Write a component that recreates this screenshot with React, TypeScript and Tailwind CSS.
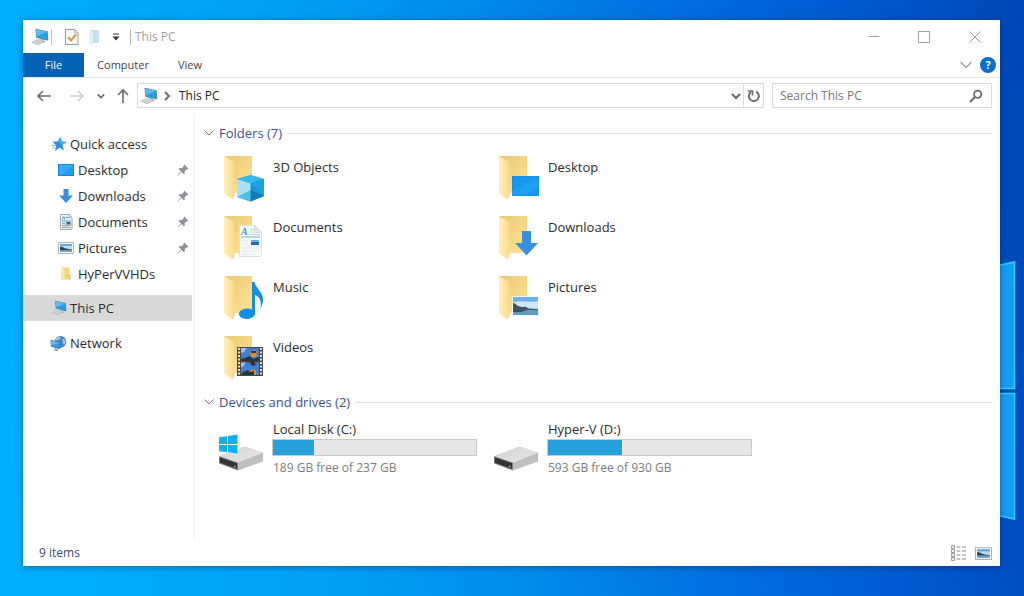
import { useState } from 'react';
import type { ReactNode } from 'react';

interface IconProps {
  className?: string;
}

interface SidebarItem {
  name: string;
  icon: ReactNode;
  pinned?: boolean;
}

interface Folder {
  name: string;
  overlay: ReactNode;
}

interface Drive {
  name: string;
  free: number;
  total: number;
  system?: boolean;
}

function PcIcon({ className }: IconProps) {
  return (
    <svg viewBox="0 0 18 18" className={className} aria-hidden="true">
      <path d="M4.500.8l12.200 2.500.6 8.700-1.200.6L5.300 9.700z" fill="#5d7f97" />
      <path d="M5 1.500l11 2.300.5 7.900-10.700-2.600z" fill="#2b9fe6" />
      <path d="M5 1.500l11 2.300L5.700 8.200z" fill="#5dbdf2" />
      <path d="M10 10.600l2.500.6.3 1.600 2.200.7-2 1.100-4-1z" fill="#9aa4ab" />
      <path d="M.8 13.500L7 10.700l6.500 2.300-6.300 3z" fill="#d3d8db" />
      <path d="M.8 13.500L7.200 16l6.300-3v.9l-6.300 3L.8 14.400z" fill="#a9b1b6" />
      <path d="M2.800 13.500L7.600 11.400M4.600 14.200l4.900-2.200M6.300 14.800l5-2.200" stroke="#b0b8bd" strokeWidth=".5" />
    </svg>
  );
}

function StarIcon({ className }: IconProps) {
  return (
    <svg viewBox="0 0 16 16" className={className} aria-hidden="true">
      <path d="M9.300 1l1.300 4.500 4.900.4-4.100 2.900 1.400 5.700-4.300-3.100L3.900 15l1.400-5.200L1.500 5.500l5.100.1z" fill="#2492e0" />
      <path d="M9.300 1l1.300 4.500 4.900.4-4.100 2.900-4.800-3.200z" fill="#45aef0" />
      <path d="M.6 9.400h4M1.600 12h2.600" stroke="#6ab7ec" />
    </svg>
  );
}

function DesktopIcon({ className }: IconProps) {
  return (
    <svg viewBox="0 0 16 16" className={className} aria-hidden="true">
      <path d="M0 2h16v12H0z" fill="#1287dd" />
      <path d="M1 3h14v10H1z" fill="#1e9cf0" />
      <path d="M1 3h14L4 13H1z" fill="#33aaf6" />
    </svg>
  );
}

function DownloadIcon({ className }: IconProps) {
  return (
    <svg viewBox="0 0 16 16" className={className} aria-hidden="true">
      <path d="M5.500 1h5v6.500H15L8 15 1 7.500h4.500z" fill="#3a8fdd" />
    </svg>
  );
}

function DocumentIcon({ className }: IconProps) {
  return (
    <svg viewBox="0 0 16 16" className={className} aria-hidden="true">
      <path d="M2.500.5h8.700l2.800 2.800v12.200H2.500z" fill="#f1f3f4" stroke="#a0a7ac" />
      <path d="M11 .5v3h3" fill="#d8dde0" stroke="#a0a7ac" strokeWidth=".7" />
      <path d="M4 5.500l1.800-3 1 3M8 3.500h2.500M4 7h8.500" stroke="#3d9ae0" fill="none" />
      <path d="M4 9.300h3.500M4 11.300h8.500M4 13.300h8.500" stroke="#8a949b" />
      <path d="M8.500 8h4v2.500h-4z" fill="#38647f" />
    </svg>
  );
}

function PictureIcon({ className }: IconProps) {
  return (
    <svg viewBox="0 0 16 16" className={className} aria-hidden="true">
      <path d="M.5 2.500h15v11H.5z" fill="#fff" stroke="#a9b4bc" />
      <path d="M2 4h12v8H2z" fill="#b9def5" />
      <path d="M2 4h12v2H2z" fill="#5ba9e6" />
      <path d="M2 6.500c2 0 3 .8 4.500 1.500S10 9 14 9.500V10H2z" fill="#2c4453" />
      <path d="M2 10h12v2H2z" fill="#6d9cbd" />
    </svg>
  );
}

function SmallFolderIcon({ className }: IconProps) {
  return (
    <svg viewBox="0 0 16 16" className={className} aria-hidden="true">
      <path d="M3 1.500h8.500v12H3z" fill="#f5d479" />
      <path d="M3 1.500l3.500 1.200v12.100L3 13.500z" fill="#fde7a6" />
      <path d="M10.500 9h2v4.500h-2z" fill="#ecc769" />
    </svg>
  );
}

function NetworkIcon({ className }: IconProps) {
  return (
    <svg viewBox="0 0 18 18" className={className} aria-hidden="true">
      <circle cx="11" cy="7.200" r="6.200" fill="#3b7fc4" />
      <path d="M8 2.500c2-1 4 0 3.500 1.500S9 4.500 8 5.500 5.500 5.500 5.500 5 6.500 3 8 2.500zM13.500 4c1.500 0 2.500 1 2.800 2.500s-.3 3-1.300 3.500-2-.8-1.500-2.300-1.500-3.200 0-3.700z" fill="#94c5ea" />
      <path d="M.5 5L11 7.500V15L1 12.500z" fill="#4c7290" />
      <path d="M1.100 5.900l9.300 2.200v6l-8.900-2.200z" fill="#2b9fe6" />
      <path d="M1.100 5.900l9.300 2.200-9 2.800z" fill="#5dbdf2" />
      <path d="M5 13.800l3 .7v1.300l1.500.6-2 .9L3 16.200l2-.8z" fill="#9aa7b0" />
    </svg>
  );
}

function PinIcon({ className }: IconProps) {
  return (
    <svg viewBox="0 0 12 12" className={className} aria-hidden="true">
      <path d="M7.300.6l4.100 4.100-1 .7-.7-.2-2.100 2.100.2 2.100-1 .9L4.600 8 .8 11.400l-.3-.3L4 7.400 1.700 5.100l.9-1 2.100.2 2.100-2.100-.2-.8z" fill="#8b9299" />
    </svg>
  );
}

function CheckPageIcon({ className }: IconProps) {
  return (
    <svg viewBox="0 0 16 18" className={className} aria-hidden="true">
      <path d="M1.500 1.500h9l3.500 3.500v11.500H1.500z" fill="#fafafa" stroke="#999" />
      <path d="M10.500 1.500V5H14" fill="none" stroke="#a8a8a8" strokeWidth=".8" />
      <path d="M4 9.300l3 3.200 5-6" fill="none" stroke="#e2963a" strokeWidth="2" />
    </svg>
  );
}

function FadedFolderIcon({ className }: IconProps) {
  return (
    <svg viewBox="0 0 12 16" className={className} aria-hidden="true">
      <path d="M1 1h10v13H1z" fill="#c6dfec" />
      <path d="M1 1l4 1.500V16l-4-1.500z" fill="#e0eff6" />
    </svg>
  );
}

function Chevron({ className }: IconProps) {
  return (
    <svg viewBox="0 0 10 10" className={className} fill="none" stroke="currentColor" aria-hidden="true">
      <path d="M.5 2.500L5 7l4.500-4.500" />
    </svg>
  );
}

function BoldChevron({ className }: IconProps) {
  return (
    <svg viewBox="0 0 10 10" className={className} fill="none" stroke="currentColor" strokeWidth="2" aria-hidden="true">
      <path d="M1 3l4 4 4-4" />
    </svg>
  );
}

function FolderIcon({ children }: { children: ReactNode }) {
  return (
    <svg viewBox="0 0 48 48" className="size-12 shrink-0" aria-hidden="true">
      <defs>
        <linearGradient id="folderBack" x1="0" y1="0" x2="1" y2="1">
          <stop offset="0" stopColor="#ebc873" />
          <stop offset="1" stopColor="#fde497" />
        </linearGradient>
        <linearGradient id="folderFlap" x1="0" y1="0" x2="1" y2="0">
          <stop offset="0" stopColor="#fff0bd" />
          <stop offset=".5" stopColor="#fde5a0" />
          <stop offset="1" stopColor="#f8d988" />
        </linearGradient>
      </defs>
      <path d="M5 2h28v37H5z" fill="url(#folderBack)" />
      <path d="M14.500 40l2.500-1v3l-2.500 2z" fill="#f4f1ea" />
      <path d="M5 2l9 5q1.500 1 1.500 3v30q-.5 2-1.500 5.500L6 40.500Q5 40 5 39z" fill="url(#folderFlap)" />
      {children}
    </svg>
  );
}

const cube = (
  <>
    <path d="M18 25l13.500-4L45 25v17l-13.500 5.500L18 43z" fill="#1795d2" />
    <path d="M18 25l13.500-4L45 25l-13.500 4.500z" fill="#35b8ea" />
    <path d="M18 25l13.500 4.500v18L18 43z" fill="#a5e2f6" />
    <path d="M18 43l13.500-7v11.500z" fill="#4cbfe6" />
    <path d="M31.500 29.500L45 25v17z" fill="#1e9fdf" />
    <path d="M31.500 36L45 42l-13.500 5.500z" fill="#0c7cba" />
  </>
);

const documentPage = (
  <>
    <path d="M20.500 11.500h15l7 7v24h-22z" fill="#f7f8f9" stroke="#dfe2e4" />
    <path d="M35.500 11.500l7 7h-7z" fill="#e2e6e8" stroke="#c8cdd0" strokeWidth=".6" />
    <text x="22" y="21" fontSize="10" fontStyle="italic" fontWeight="700" fontFamily="Liberation Serif, serif" fill="#3795d6">A</text>
    <path d="M31 15.500h4M31 18h4M31 20.500h10" stroke="#b9dbee" />
    <path d="M22 23h19" stroke="#6eb5de" />
    <path d="M32 26h8v5h-8z" fill="#2b6ca0" />
    <path d="M32 26h8v2h-8z" fill="#65b2e6" />
    <path d="M22.500 26.500h7M22.500 29h7M22.500 34h18M22.500 37h18M22.500 40h12" stroke="#e8ebed" />
  </>
);

const musicNote = (
  <path d="M33 8h2.500c.7 6 9 10 8.500 18.500-.2 3.500-1.500 6-2.700 8 1.300-6 .5-11-5.300-13.500V39c0 3.500-4 6-8.500 6S20 42.700 20 39.800s4-5.300 8-5.300c2 0 3.700.4 5 1z" fill="#0f8fe6" />
);

const filmStrip = (
  <>
    <path d="M18 13h26v29H18z" fill="#494746" />
    <path d="M22 14h18v13H22zM22 28.500h18V41H22z" fill="#3f7fd6" />
    <path d="M22 14h6l-3 4-3 1zM22 28.500h5l-3 4-2 1z" fill="#9ec5ef" />
    <path d="M31 18c1-2 6-2 7 0l-1 5h-5zM31 37c1-2 5-2 6 0v4h-7z" fill="#dd8d24" />
    <path d="M32 17h5v2h-5zM26 24l5-2 3 3 6-2v4H22v-2zM30 27h5l2 4-4 1zM24 38l5-2 2 2 4-1v4H22z" fill="#2c3439" />
    <path d="M20 14v28M42 14v28" stroke="#e6e3df" strokeWidth="2" strokeDasharray="2 1.500" />
  </>
);

const desktopScreen = (
  <>
    <path d="M18 22h27v20H18z" fill="#1488df" />
    <path d="M18.500 22.500h26v19h-26z" fill="#1897ef" />
    <path d="M18.500 36L44.500 24v10L30 41.500H18.500z" fill="#1e9ff4" />
  </>
);

const downloadArrow = <path d="M28 17h9v12h7L32.500 41.500 21 29h7z" fill="#378fe0" />;

const photo = (
  <>
    <path d="M18 22h27v20H18z" fill="#f5f7f8" />
    <path d="M19 23h25v18H19z" fill="#cde7f5" />
    <path d="M19 23h25v4c-8 2-16-1-25 1z" fill="#6cb0e6" />
    <path d="M19 29l2 .5 3 2.500 4 1 3-.5 4 2 9 .5v1.500H19z" fill="#42575f" />
    <path d="M19 36h25v5H19z" fill="#5b9bc9" />
    <path d="M19 36h14l-6 2h-8z" fill="#2f546b" />
  </>
);

function DriveIcon({ system }: { system?: boolean }) {
  return (
    <svg viewBox="0 0 48 48" className="mt-[5px] size-12 shrink-0" aria-hidden="true">
      <defs>
        <linearGradient id="driveTop" x1="0" y1="0" x2="1" y2="1">
          <stop offset="0" stopColor="#cfcfcf" />
          <stop offset="1" stopColor="#ebebeb" />
        </linearGradient>
      </defs>
      <path d="M0 32l24-9q2-.7 4 0l16 5.500-25 10z" fill="url(#driveTop)" />
      <path d="M19 38.500l25-10v9L19 46.500z" fill="#bfbfbf" />
      <path d="M0 32l19 6.500v8L0 39.500z" fill="#8d8d8d" />
      <path d="M.8 33.300l17.400 5.900v5.900L.8 38.800z" fill="#343434" />
      <circle cx="15.800" cy="42.500" r=".8" fill="#d8e6d8" />
      {system && (
        <>
          <path d="M0 13l19-2.500v19.500L0 27.800z" fill="#fff" />
          <path d="M0 13.300l8-1.100v7.800H0zM9 12l9.500-1.400V20H9zM0 21h8v7.200l-8-1zM9 21h9.500v8.700L9 28.300z" fill="#0fb0f2" />
        </>
      )}
    </svg>
  );
}

const quickAccess: SidebarItem[] = [
  { name: 'Desktop', icon: <DesktopIcon className="size-4" />, pinned: true },
  { name: 'Downloads', icon: <DownloadIcon className="size-4" />, pinned: true },
  { name: 'Documents', icon: <DocumentIcon className="size-4" />, pinned: true },
  { name: 'Pictures', icon: <PictureIcon className="size-4" />, pinned: true },
  { name: 'HyPerVVHDs', icon: <SmallFolderIcon className="size-4" /> },
];

const folders: Folder[] = [
  { name: '3D Objects', overlay: cube },
  { name: 'Desktop', overlay: desktopScreen },
  { name: 'Documents', overlay: documentPage },
  { name: 'Downloads', overlay: downloadArrow },
  { name: 'Music', overlay: musicNote },
  { name: 'Pictures', overlay: photo },
  { name: 'Videos', overlay: filmStrip },
];

const drives: Drive[] = [
  { name: 'Local Disk (C:)', free: 189, total: 237, system: true },
  { name: 'Hyper-V (D:)', free: 593, total: 930 },
];

function Wallpaper() {
  return (
    <svg viewBox="0 0 24 262" className="absolute right-0 top-[260px] h-[262px] w-6" aria-hidden="true">
      <path d="M0 5l15-3v127H0zM0 133h15v127l-15-4z" fill="#129cf2" />
      <path d="M0 5l14.500-3v126.500H0M0 133.500h14.500V259L0 256" fill="none" stroke="#2fd0fa" strokeWidth="1.500" />
    </svg>
  );
}

function TitleBar() {
  return (
    <header className="flex h-[33px] items-center text-[#a0a0a0]">
      <div className="flex flex-1 items-center pl-2">
        <PcIcon className="size-[18px]" />
        <span className="ml-0.5 h-4 w-px bg-[#bdbdbd]" />
        <button aria-label="Properties" className="ml-3">
          <CheckPageIcon className="h-[18px] w-4" />
        </button>
        <button aria-label="New folder" className="ml-2">
          <FadedFolderIcon className="h-4 w-3" />
        </button>
        <button aria-label="Customize Quick Access Toolbar" className="ml-3 text-[#333]">
          <svg viewBox="0 0 8 8" className="size-2" aria-hidden="true">
            <path d="M1 1h6" stroke="currentColor" />
            <path d="M.5 3.500h7L4 7.500z" fill="currentColor" />
          </svg>
        </button>
        <span className="ml-2.5 h-4 w-px bg-[#b5b5b5]" />
        <h1 className="ml-1 text-[12px]">This PC</h1>
      </div>
      <button aria-label="Minimize" className="flex w-[50px] justify-center">
        <svg viewBox="0 0 12 12" className="size-3" fill="none" stroke="currentColor" aria-hidden="true">
          <path d="M.5 5.500h11" />
        </svg>
      </button>
      <button aria-label="Maximize" className="flex w-[50px] justify-center">
        <svg viewBox="0 0 12 12" className="size-3" fill="none" stroke="currentColor" aria-hidden="true">
          <path d="M.5.5h11v11H.5z" />
        </svg>
      </button>
      <button aria-label="Close" className="flex w-[51px] justify-center">
        <svg viewBox="0 0 12 12" className="size-3" fill="none" stroke="currentColor" aria-hidden="true">
          <path d="M.5.5l11 11M11.500.5l-11 11" />
        </svg>
      </button>
    </header>
  );
}

function RibbonTabs() {
  return (
    <div className="flex h-[25px] items-stretch border-b border-[#e6e6e6] text-[11px] text-[#444]">
      <button className="w-[61px] bg-[#0563b5] text-white">File</button>
      <button className="w-[78px]">Computer</button>
      <button className="w-14">View</button>
      <div className="ml-auto flex items-center gap-2 pr-1">
        <button aria-label="Expand the Ribbon" className="text-[#999]">
          <Chevron className="size-3" />
        </button>
        <button aria-label="Help" className="size-4 rounded-full bg-[#0a6fd0] text-[11px] leading-4 font-bold text-white">
          ?
        </button>
      </div>
    </div>
  );
}

function AddressBar() {
  const [query, setQuery] = useState('');

  return (
    <div className="flex items-center gap-2 pt-[5px] pr-2 pb-[7px] pl-[13px] text-[#6b6b6b]">
      <div className="flex w-[93px] items-center">
        <button aria-label="Back">
          <svg viewBox="0 0 16 16" className="size-4" fill="none" stroke="currentColor" strokeWidth="1.600" aria-hidden="true">
            <path d="M15 8H2M7 3L2 8l5 5" />
          </svg>
        </button>
        <button aria-label="Forward" className="ml-[17px] text-[#d2d2d2]">
          <svg viewBox="0 0 16 16" className="size-4" fill="none" stroke="currentColor" strokeWidth="1.600" aria-hidden="true">
            <path d="M1 8h13M9 3l5 5-5 5" />
          </svg>
        </button>
        <button aria-label="Recent locations" className="ml-3">
          <BoldChevron className="size-2" />
        </button>
        <button aria-label="Up" className="ml-2.5">
          <svg viewBox="0 0 16 16" className="size-4" fill="none" stroke="currentColor" strokeWidth="1.600" aria-hidden="true">
            <path d="M8 15V2M3 7l5-5 5 5" />
          </svg>
        </button>
      </div>
      <div className="flex h-[25px] min-w-0 flex-1 items-center border border-[#dcdcdc]">
        <PcIcon className="ml-0.5 size-[18px]" />
        <BoldChevron className="ml-1 size-2.5 -rotate-90" />
        <a href="#this-pc" className="ml-[7px] flex-1 text-[12px] text-[#222]">This PC</a>
        <button aria-label="Previous locations" className="px-0.5">
          <BoldChevron className="size-2.5" />
        </button>
        <button aria-label="Refresh" className="flex h-full w-5 items-center justify-center border-l border-[#dcdcdc]">
          <svg viewBox="0 0 14 14" className="size-3.5" fill="none" stroke="currentColor" strokeWidth="2" aria-hidden="true">
            <path d="M9 2.600A5 5 0 1 1 4 3" />
            <path d="M.8 2h4.700v4.500" strokeWidth="1.700" />
          </svg>
        </button>
      </div>
      <div className="flex h-[25px] w-[220px] items-center border border-[#dcdcdc] pr-2 pl-[7px]">
        <input
          type="search"
          aria-label="Search This PC"
          placeholder="Search This PC"
          value={query}
          onChange={(e) => setQuery(e.target.value)}
          className="min-w-0 flex-1 text-[12px] text-[#222] outline-none placeholder:text-[#777]"
        />
        <svg viewBox="0 0 14 14" className="size-3.5" fill="none" stroke="currentColor" strokeWidth="1.800" aria-hidden="true">
          <circle cx="8.700" cy="5.300" r="3.600" />
          <path d="M6 8l-5 5" strokeWidth="2.200" />
        </svg>
      </div>
    </div>
  );
}

function Sidebar() {
  return (
    <nav className="w-[172px] shrink-0 border-r border-[#f0f0f0] pt-4">
      <a href="#quick-access" className="flex h-[26px] items-center pl-7">
        <StarIcon className="size-4" />
        <span className="ml-[3px]">Quick access</span>
      </a>
      <ul>
        {quickAccess.map((item) => (
          <li key={item.name}>
            <a href={`#${item.name}`} className="flex h-[26px] items-center pr-[5px] pl-[35px]">
              {item.icon}
              <span className="ml-1 flex-1">{item.name}</span>
              {item.pinned && <PinIcon className="size-3" />}
            </a>
          </li>
        ))}
      </ul>
      <a href="#this-pc" className="mt-2 mr-0.5 flex h-[26px] items-center bg-[#d9d9d9] pl-7">
        <PcIcon className="size-4" />
        <span className="ml-[3px]">This PC</span>
      </a>
      <a href="#network" className="mt-[9px] flex h-[26px] items-center pl-[27px]">
        <NetworkIcon className="size-[17px]" />
        <span className="ml-[3px]">Network</span>
      </a>
    </nav>
  );
}

function GroupHeader({ label }: { label: string }) {
  return (
    <h2 className="flex h-5 items-center">
      <button className="flex items-center text-[#3a4f8f]">
        <Chevron className="size-2.5 text-[#777]" />
        <span className="ml-[5px]">{label}</span>
      </button>
      <span className="ml-1.5 h-px flex-1 bg-[#dedede]" />
    </h2>
  );
}

function DriveTile({ drive }: { drive: Drive }) {
  const used = ((drive.total - drive.free) / drive.total) * 100;

  return (
    <a href={`#${drive.name}`} className="flex gap-[5px]">
      <DriveIcon system={drive.system} />
      <div className="w-[205px]">
        <p className="px-px">{drive.name}</p>
        <div className="h-[17px] border border-[#c9c9c9] bg-[#e6e6e6]">
          <div className="h-full bg-[#26a0da]" style={{ width: `${used}%` }} />
        </div>
        <p className="mt-0.5 px-px text-[12px] leading-5 text-[#7c7c7c]">
          {drive.free} GB free of {drive.total} GB
        </p>
      </div>
    </a>
  );
}

export default function App() {
  return (
    <div className="relative flex min-h-screen bg-[linear-gradient(84deg,#00b0ff_0%,#00a0f5_30%,#008aec_50%,#006ade_70%,#0054cc_88%,#0046b8_100%)] pt-5 pr-6 pb-[30px] pl-[23px] font-['Open_Sans',sans-serif] text-[13px] leading-5 text-[#2b2b2b]">
      <Wallpaper />
      <div className="relative flex min-w-0 flex-1 flex-col bg-white shadow-[0_1px_6px_rgba(0,30,80,0.5)]">
        <TitleBar />
        <RibbonTabs />
        <AddressBar />
        <div className="flex flex-1">
          <Sidebar />
          <main className="min-w-0 flex-1 pt-2 pr-2 pl-[9px]">
            <section>
              <GroupHeader label={`Folders (${folders.length})`} />
              <div className="mt-[11px] grid grid-cols-[repeat(auto-fill,275px)] gap-y-3 pl-[15px]">
                {folders.map((folder) => (
                  <a key={folder.name} href={`#${folder.name}`} className="flex gap-1.5">
                    <FolderIcon>{folder.overlay}</FolderIcon>
                    <span className="pt-[3px]">{folder.name}</span>
                  </a>
                ))}
              </div>
            </section>
            <section className="mt-[10px]">
              <GroupHeader label={`Devices and drives (${drives.length})`} />
              <div className="mt-[7px] grid grid-cols-[repeat(auto-fill,275px)] pl-[15px]">
                {drives.map((drive) => (
                  <DriveTile key={drive.name} drive={drive} />
                ))}
              </div>
            </section>
          </main>
        </div>
        <footer className="flex h-[26px] items-center pr-2 pl-4 text-[12px] text-[#3b4a75]">
          <span>{folders.length + drives.length} items</span>
          <div className="ml-auto flex items-center gap-2">
            <button aria-label="Details view">
              <svg viewBox="0 0 17 16" className="h-4 w-[17px]" aria-hidden="true">
                <path d="M1.500.5h3v3h-3zM1.500 4.500h3v3h-3zM1.500 8.500h3v3h-3zM1.500 12.500h3v3h-3z" fill="#eee" stroke="#888" strokeWidth=".8" />
                <path d="M6.500 2h4M12 2h4M6.500 6h4M12 6h4M6.500 10h4M12 10h4M6.500 14h4M12 14h4" stroke="#888" />
              </svg>
            </button>
            <button aria-label="Large icons view">
              <PictureIcon className="size-[17px]" />
            </button>
          </div>
        </footer>
      </div>
    </div>
  );
}
